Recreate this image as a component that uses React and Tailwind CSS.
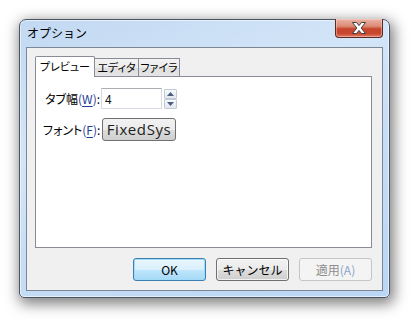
import React from "react";

const CloseButton = () => (
  <div className="-mt-px mr-[6px] flex h-[19px] w-[48px] items-center justify-center rounded-b-[4px] border border-t-0 border-[#5b2a22] bg-[linear-gradient(180deg,#eab3a5_0%,#dc8b76_40%,#c7452c_55%,#c9472f_80%,#dd7a62_100%)] shadow-[inset_0_0_0_1px_rgba(255,220,210,0.45)]">
    <svg width="14" height="12" viewBox="0 0 14 12">
      <polygon
        points="0.5,0.5 4.5,0.5 7,3.6 9.5,0.5 13.5,0.5 9.2,6 13.5,11.5 9.5,11.5 7,8.4 4.5,11.5 0.5,11.5 4.8,6"
        fill="#ffffff"
        stroke="#3d3d3d"
        strokeWidth="1"
        strokeLinejoin="round"
      />
    </svg>
  </div>
);

const Tab = ({ label, active, className }) =>
  active ? (
    <div
      className={`flex h-[21px] items-center justify-center whitespace-nowrap rounded-t-[2px] border border-b-0 border-[#898c95] bg-white pb-[1px] ${className}`}
    >
      {label}
    </div>
  ) : (
    <div
      className={`flex h-[19px] items-center justify-center whitespace-nowrap border border-l-0 border-[#898c95] bg-[linear-gradient(180deg,#f3f3f3_0%,#ebebeb_50%,#dedede_51%,#e5e5e5_100%)] ${className}`}
    >
      {label}
    </div>
  );

const Arrow = ({ up }) => (
  <svg width="7" height="4" viewBox="0 0 7 4">
    <polygon points={up ? "0,4 3.5,0 7,4" : "0,0 7,0 3.5,4"} fill="#4b5d80" />
  </svg>
);

const Spinner = () => (
  <div className="ml-[2px] mt-px flex w-[13px] flex-col">
    <div className="flex h-[10px] items-center justify-center rounded-[1px] border border-[#c2cad5] bg-[linear-gradient(180deg,#f7f9fb_0%,#e3e8ef_100%)]">
      <Arrow up />
    </div>
    <div className="flex h-[10px] items-center justify-center rounded-[1px] border border-[#c2cad5] bg-[linear-gradient(180deg,#f7f9fb_0%,#e3e8ef_100%)]">
      <Arrow />
    </div>
  </div>
);

const Button = ({ children, variant = "normal" }) => {
  const styles = {
    normal:
      "border-[#707070] bg-[linear-gradient(180deg,#f2f2f2_0%,#ebebeb_50%,#dddddd_51%,#cfcfcf_100%)] shadow-[inset_0_0_0_1px_rgba(255,255,255,0.7)] text-black",
    default:
      "border-[#3c7fb1] bg-[linear-gradient(180deg,#eaf6fd_0%,#d9f0fc_50%,#bee6fd_51%,#a7d9f5_100%)] shadow-[inset_0_0_0_1px_#9fdcf7] text-black",
    disabled: "border-[#c5c5c5] bg-[#f4f4f4] text-[#8d8d8d]",
  };
  return (
    <div
      className={`flex h-[23px] w-[73px] items-center justify-center whitespace-nowrap rounded-[3px] border ${styles[variant]}`}
    >
      {children}
    </div>
  );
};

export default function App() {
  return (
    <div className="h-[321px] w-[411px] bg-white pl-[19px] pt-[19px] text-[12px] leading-none text-black [font-family:'Noto_Sans_CJK_JP',sans-serif]">
      <div className="flex h-[279px] w-[371px] flex-col rounded-b-[5px] rounded-t-[7px] border border-[#4b5562] bg-[linear-gradient(160deg,#c2d9f2_0%,#d3e5f8_35%,#c9def5_55%,#bad6f4_100%)] shadow-[2px_4px_14px_2px_rgba(0,0,0,0.5),inset_0_0_0_1px_rgba(255,255,255,0.55)]">
        {/* title bar */}
        <div className="flex h-[27px] items-start justify-between">
          <span className="pl-[7px] pt-[7px] text-[12px]">オプション</span>
          <CloseButton />
        </div>

        {/* client area */}
        <div className="mx-[6px] flex h-[244px] flex-col border border-[#7b8794] bg-[#f0f0f0] pl-[8px] pr-[10px] pt-[8px]">
          <div className="relative z-10 -mb-px flex h-[21px] items-end text-[11px] [font-feature-settings:'palt']">
            <Tab label="プレビュー" active className="w-[60px]" />
            <Tab label="エディタ" className="w-[44px]" />
            <Tab label="ファイラ" className="w-[41px]" />
          </div>

          <div className="flex h-[172px] flex-col border border-[#898c95] bg-white">
            <div className="mt-[11px] flex items-start pl-[9px]">
              <div className="flex h-[21px] w-[56px] items-center whitespace-nowrap [font-feature-settings:'palt']">
                タブ幅
                <span className="text-[#1f3c96]">
                  (<span className="underline underline-offset-2">W</span>)
                </span>
                :
              </div>
              <div className="flex h-[21px] w-[61px] items-center border border-[#d5dae2] border-t-[#abadb3] bg-white pl-[3px] text-[#111]">
                4
              </div>
              <Spinner />
            </div>

            <div className="mt-[9px] flex items-start pl-[7px]">
              <div className="flex h-[23px] w-[59px] items-center whitespace-nowrap [font-feature-settings:'palt']">
                フォント
                <span className="text-[#1f3c96]">
                  (<span className="underline underline-offset-2">F</span>)
                </span>
                :
              </div>
              <div className="flex h-[23px] w-[74px] items-center justify-center rounded-[3px] border border-[#707070] bg-[linear-gradient(180deg,#f2f2f2_0%,#ebebeb_50%,#dddddd_51%,#cfcfcf_100%)] text-[15px] tracking-[0.6px] text-[#1e1e1e] [font-family:'Open_Sans',sans-serif]">
                FixedSys
              </div>
            </div>
          </div>

          <div className="mt-[10px] flex justify-end gap-[10px]">
            <Button variant="default">OK</Button>
            <Button>キャンセル</Button>
            <Button variant="disabled">
              適用<span className="text-[#8aa4c8]">(A)</span>
            </Button>
          </div>
        </div>
      </div>
    </div>
  );
}
